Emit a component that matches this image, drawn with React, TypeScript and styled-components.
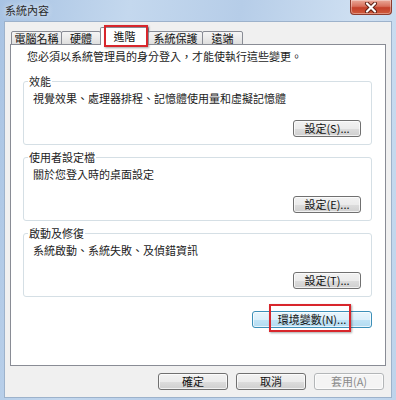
import React from "react";
import styled, { createGlobalStyle } from "styled-components";

const GlobalStyle = createGlobalStyle`
  html, body {
    margin: 0;
    padding: 0;
    background: #b9d0e9;
  }
  body {
    font-family: "Noto Sans CJK TC", "Noto Sans", sans-serif;
    font-size: 11px;
    color: #1c1c1c;
  }
`;

const Window = styled.div`
  width: 396px;
  height: 400px;
  box-sizing: border-box;
  display: flex;
  flex-direction: column;
  padding: 0 4px 2px 4px;
  background: linear-gradient(
    100deg,
    #a8c3e3 0%,
    #c4d8ee 28%,
    #b6cde8 52%,
    #cfe0f2 78%,
    #bdd3eb 100%
  );
`;

const TitleBar = styled.div`
  height: 21px;
  display: flex;
  justify-content: space-between;
  align-items: flex-start;
`;

const Title = styled.div`
  padding-left: 1px;
  line-height: 21px;
  font-size: 11px;
  color: #2b2b2b;
  text-shadow: 0 0 6px rgba(255, 255, 255, 0.8);
`;

const CloseButton = styled.div`
  width: 42px;
  height: 15px;
  box-sizing: border-box;
  display: flex;
  align-items: center;
  justify-content: center;
  border: 1px solid #8e3b2d;
  border-top: none;
  border-radius: 0 0 4px 4px;
  background: linear-gradient(#eaa999 0%, #d8705c 45%, #c4402a 55%, #cf5a3c 100%);
  box-shadow: inset 0 0 0 1px rgba(255, 255, 255, 0.35);
`;

const Client = styled.div`
  flex: 1;
  display: flex;
  flex-direction: column;
  background: #f0f0f0;
  border: 1px solid #9db2cb;
  padding: 6px 5px 0 5px;
`;

const TabStrip = styled.div`
  height: 17px;
  display: flex;
  align-items: flex-end;
  padding-left: 2px;
  margin-bottom: -1px;
  position: relative;
  z-index: 1;
`;

const Tab = styled.div<{ $w: number; $active?: boolean }>`
  position: relative;
  width: ${(p) => p.$w}px;
  height: ${(p) => (p.$active ? 18 : 14)}px;
  box-sizing: border-box;
  margin-left: -1px;
  border: 1px solid #898c95;
  border-bottom: ${(p) => (p.$active ? "none" : "1px solid #898c95")};
  border-radius: 2px 2px 0 0;
  background: ${(p) =>
    p.$active ? "#ffffff" : "linear-gradient(#f5f5f5, #ebebeb 50%, #dedede)"};
  text-align: center;
  line-height: ${(p) => (p.$active ? 14 : 12)}px;
  padding-top: ${(p) => (p.$active ? 1 : 0)}px;
  font-size: 11px;
  color: #111;
`;

const Mark = styled.span<{ $t: number; $r: number; $b: number; $l: number }>`
  position: absolute;
  top: ${(p) => p.$t}px;
  right: ${(p) => p.$r}px;
  bottom: ${(p) => p.$b}px;
  left: ${(p) => p.$l}px;
  border: 2px solid #d8262c;
  box-shadow: 1px 1px 2px rgba(0, 0, 0, 0.35);
  pointer-events: none;
`;

const Panel = styled.div`
  height: 322px;
  box-sizing: border-box;
  background: #ffffff;
  border: 1px solid #898c95;
  padding: 4px 13px 0 12px;
  display: flex;
  flex-direction: column;
`;

const Notice = styled.div`
  line-height: 14px;
  padding-left: 4px;
  margin-bottom: 11px;
`;

const Group = styled.fieldset`
  margin: 0 0 5px 0;
  padding: 0 10px 7px 9px;
  border: 1px solid #d5dfe5;
  border-radius: 3px;
  display: flex;
  flex-direction: column;
`;

const Legend = styled.legend`
  margin-left: -5px;
  padding: 0 1px;
  line-height: 14px;
  font-size: 11px;
`;

const Desc = styled.div`
  line-height: 14px;
  margin-top: 3px;
  margin-bottom: 15px;
`;

const Button = styled.div<{ $w: number; $focus?: boolean; $disabled?: boolean }>`
  position: relative;
  width: ${(p) => p.$w}px;
  height: 17px;
  box-sizing: border-box;
  align-self: flex-end;
  border: 1px solid
    ${(p) => (p.$focus ? "#3c8fb8" : p.$disabled ? "#b3b6b8" : "#707070")};
  border-radius: 3px;
  background: ${(p) =>
    p.$focus
      ? "linear-gradient(#e8f5fc, #dcf0fb 50%, #c2e4f6 51%, #b3dbf1)"
      : p.$disabled
      ? "#f4f4f4"
      : "linear-gradient(#f2f2f2, #ebebeb 50%, #dddddd 51%, #cfcfcf)"};
  box-shadow: inset 0 0 0 1px rgba(255, 255, 255, 0.7);
  color: ${(p) => (p.$disabled ? "#8a8a8a" : "#111")};
  font-size: 11px;
  line-height: 15px;
  text-align: center;
`;

const EnvRow = styled.div`
  display: flex;
  justify-content: flex-end;
  margin-top: 9px;
`;

const Footer = styled.div`
  display: flex;
  justify-content: flex-end;
  gap: 8px;
  padding-right: 2px;
  margin-top: 7px;
`;

const CloseIcon = () => (
  <svg width="14" height="11" viewBox="0 0 14 11">
    <path d="M3 1.5 L11 9.5 M11 1.5 L3 9.5" stroke="#5b1d12" strokeWidth="4" strokeLinecap="round" />
    <path d="M3 1.5 L11 9.5 M11 1.5 L3 9.5" stroke="#ffffff" strokeWidth="2.2" strokeLinecap="round" />
  </svg>
);

const groups = [
  { title: "效能", desc: "視覺效果、處理器排程、記憶體使用量和虛擬記憶體", btn: "設定(S)..." },
  { title: "使用者設定檔", desc: "關於您登入時的桌面設定", btn: "設定(E)..." },
  { title: "啟動及修復", desc: "系統啟動、系統失敗、及偵錯資訊", btn: "設定(T)..." },
];

const App = () => {
  return (
    <>
      <GlobalStyle />
      <Window>
        <TitleBar>
          <Title>系統內容</Title>
          <CloseButton>
            <CloseIcon />
          </CloseButton>
        </TitleBar>
        <Client>
          <TabStrip>
            <Tab $w={51}>電腦名稱</Tab>
            <Tab $w={40}>硬體</Tab>
            <Tab $w={49} $active>
              進階
              <Mark $t={-3} $r={0} $b={-2} $l={3} />
            </Tab>
            <Tab $w={55}>系統保護</Tab>
            <Tab $w={41}>遠端</Tab>
          </TabStrip>
          <Panel>
            <Notice>您必須以系統管理員的身分登入，才能使執行這些變更。</Notice>
            {groups.map((g) => (
              <Group key={g.title}>
                <Legend>{g.title}</Legend>
                <Desc>{g.desc}</Desc>
                <Button $w={68}>{g.btn}</Button>
              </Group>
            ))}
            <EnvRow>
              <Button $w={120} $focus>
                環境變數(N)...
                <Mark $t={-8} $r={20} $b={-5} $l={16} />
              </Button>
            </EnvRow>
          </Panel>
          <Footer>
            <Button $w={70}>確定</Button>
            <Button $w={70}>取消</Button>
            <Button $w={70} $disabled>
              套用(A)
            </Button>
          </Footer>
        </Client>
      </Window>
    </>
  );
};

export default App;
